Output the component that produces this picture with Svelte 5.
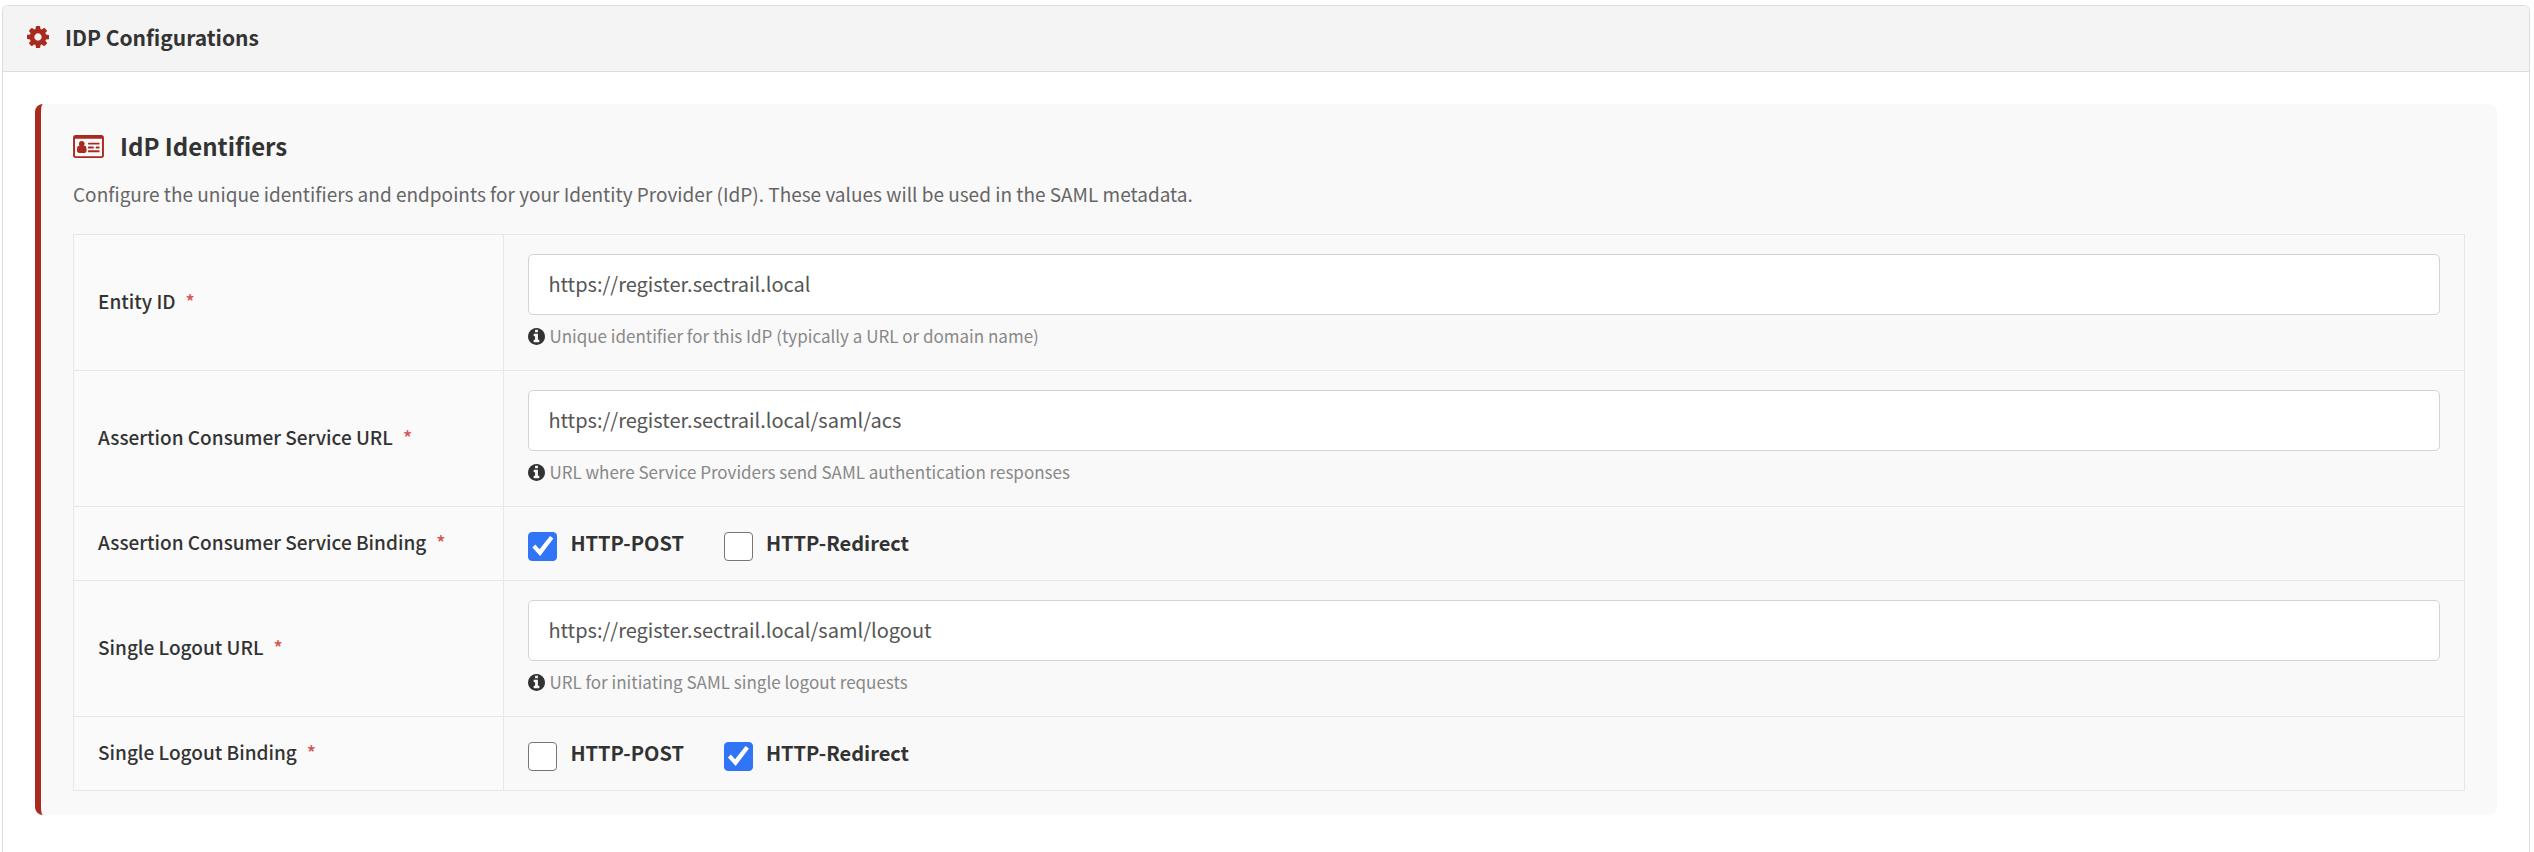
<script lang="ts">
  interface Row {
    id: string
    label: string
    value?: string
    help?: string
    post?: boolean
    redirect?: boolean
  }

  let rows: Row[] = $state([
    { id: 'entity-id', label: 'Entity ID', value: 'https://register.sectrail.local', help: 'Unique identifier for this IdP (typically a URL or domain name)' },
    { id: 'acs-url', label: 'Assertion Consumer Service URL', value: 'https://register.sectrail.local/saml/acs', help: 'URL where Service Providers send SAML authentication responses' },
    { id: 'acs-binding', label: 'Assertion Consumer Service Binding', post: true, redirect: false },
    { id: 'slo-url', label: 'Single Logout URL', value: 'https://register.sectrail.local/saml/logout', help: 'URL for initiating SAML single logout requests' },
    { id: 'slo-binding', label: 'Single Logout Binding', post: false, redirect: true },
  ])
</script>

<main class="page">
  <div class="panel">
    <header class="panel-head">
      <svg class="gear" viewBox="0 0 1536 1536" aria-hidden="true">
        <path d="M1024 768q0-106-75-181t-181-75-181 75-75 181 75 181 181 75 181-75 75-181zm512-109v222q0 12-8 23t-20 13l-185 28q-19 54-39 91 35 50 107 138 10 12 10 25t-9 23q-27 37-99 108t-94 71q-12 0-26-9l-138-108q-44 23-91 38-16 136-29 186-7 28-36 28H657q-14 0-24.500-8.500T621 1506l-28-184q-49-16-90-37l-141 107q-10 9-25 9-14 0-25-11-126-114-165-168-7-10-7-23 0-12 8-23 15-21 51-66.500t54-70.500q-27-50-41-99L29 913q-13-2-21-12.500T0 877V655q0-12 8-23t19-13l186-28q14-46 39-92-40-57-107-138-10-12-10-24 0-10 9-23 26-36 98.500-107.500T337 135q13 0 26 10l138 107q44-23 91-38 16-136 29-186 7-28 36-28h222q14 0 24.500 8.500T915 30l28 184q49 16 90 37l142-107q9-9 24-9 13 0 25 10 129 119 165 170 7 8 7 22 0 12-8 23-15 21-51 66.500t-54 70.500q26 50 41 98l183 28q13 2 21 12.500t8 23.500z" />
      </svg>
      <h1>IDP Configurations</h1>
    </header>

    <div class="panel-body">
      <section class="section">
        <div class="section-head">
          <svg class="card-icon" viewBox="0 0 2048 1792" aria-hidden="true">
            <path fill-rule="evenodd" d="M160 128h1728q66 0 113 47t47 113v1216q0 66-47 113t-113 47H160q-66 0-113-47T0 1504V288q0-66 47-113t113-47zM128 384v1120q0 13 9.500 22.500T160 1536h1728q13 0 22.500-9.500t9.500-22.500V384z" />
            <path d="M896 1157q0 77-43 127t-105 44H404q-62 0-105-44t-43-127q0-57 6-108t20-101 46-79 84-29q67 64 164 64t164-64q52 0 84 29t46 79 20 101 6 108zM768 720q0 79-56 135t-136 57-136-57-56-135 56-136 136-56 136 56 56 136z" />
            <path d="M1024 1152h704q32 0 32 32v64q0 32-32 32h-704q-32 0-32-32v-64q0-32 32-32zM1024 896h320q32 0 32 32v64q0 32-32 32h-320q-32 0-32-32v-64q0-32 32-32zM1536 896h192q32 0 32 32v64q0 32-32 32h-192q-32 0-32-32v-64q0-32 32-32zM1024 640h704q32 0 32 32v64q0 32-32 32h-704q-32 0-32-32v-64q0-32 32-32z" />
          </svg>
          <h2>IdP Identifiers</h2>
        </div>
        <p class="intro">Configure the unique identifiers and endpoints for your Identity Provider (IdP). These values will be used in the SAML metadata.</p>

        <table>
          <tbody>
            {#each rows as row (row.id)}
              <tr>
                {#if row.value !== undefined}
                  <th scope="row"><label for={row.id}>{row.label}<span class="required">*</span></label></th>
                  <td>
                    <input class="field" type="text" id={row.id} aria-describedby="{row.id}-help" bind:value={row.value} />
                    <p class="help" id="{row.id}-help">
                      <svg class="info" viewBox="0 0 1536 1536" aria-hidden="true">
                        <path d="M1024 1248v-160q0-14-9-23t-23-9h-96V544q0-14-9-23t-23-9H544q-14 0-23 9t-9 23v160q0 14 9 23t23 9h96v320h-96q-14 0-23 9t-9 23v160q0 14 9 23t23 9h448q14 0 23-9t9-23zM896 352V192q0-14-9-23t-23-9H672q-14 0-23 9t-9 23v160q0 14 9 23t23 9h192q14 0 23-9t9-23zm640 416q0 209-103 385.500T1153.500 1433 768 1536t-385.500-103T103 1153.500 0 768t103-385.500T382.500 103 768 0t385.500 103T1433 382.500 1536 768z" />
                      </svg>
                      <span>{row.help}</span>
                    </p>
                  </td>
                {:else}
                  <th scope="row" id={row.id}>{row.label}<span class="required">*</span></th>
                  <td>
                    <div class="choices" role="group" aria-labelledby={row.id}>
                      <label class="choice"><input type="checkbox" bind:checked={row.post} /><span>HTTP-POST</span></label>
                      <label class="choice"><input type="checkbox" bind:checked={row.redirect} /><span>HTTP-Redirect</span></label>
                    </div>
                  </td>
                {/if}
              </tr>
            {/each}
          </tbody>
        </table>
      </section>
    </div>
  </div>
</main>

<style>
  :global(body) { background: #fff; }
  * { box-sizing: border-box; }
  .page { min-height: 100vh; display: flex; padding: 5px 4px 0 2px; color: #333; font-family: "Source Sans Pro", "Noto Sans CJK SC", "Noto Sans", sans-serif; }
  .panel { flex: 1; border: 1px solid #ddd; border-bottom: none; border-radius: 6px 6px 0 0; }
  h1, h2, p { margin: 0; }
  svg { flex: none; fill: currentColor; }

  .panel-head { display: flex; align-items: center; gap: 16px; height: 66px; padding: 0 24px 3px; background: #f4f4f4; border-bottom: 1px solid #ddd; border-radius: 5px 5px 0 0; }
  h1 { font-size: 21px; line-height: 32px; font-weight: 700; }
  .gear { width: 22px; height: 22px; color: #a92b20; }

  .panel-body { padding: 32px; }
  .section { padding: 22px 32px 24px; background: #f9f9f9; border-left: 6px solid #a92b20; border-radius: 8px; }
  .section-head { display: flex; align-items: center; gap: 16px; height: 40px; }
  h2 { font-size: 24px; line-height: 36px; font-weight: 700; }
  .card-icon { width: 31px; height: 27px; color: #a92b20; }
  .intro { margin: 12px 0 25px; font-size: 19px; line-height: 31px; color: #666; }

  table { width: 100%; border-collapse: collapse; table-layout: fixed; }
  th, td { border: 1px solid #e7e7e7; padding: 19px 24px; vertical-align: middle; }
  th { width: 18%; padding: 17px 24px 20px; background: #fafafa; text-align: left; font-size: 19px; line-height: 28px; font-weight: 500; }
  .required { margin-left: 10px; color: #d9534f; }
  .field { display: block; width: 100%; height: 61px; padding: 0 19px 2px; border: 1px solid #d2d2d9; border-radius: 5px; background: #fff; color: #555; font-family: inherit; font-size: 20px; }
  .help { display: flex; align-items: center; gap: 4px; margin-top: 6px; font-size: 17px; line-height: 30px; color: #888; }
  .info { width: 17px; height: 17px; color: #333; }

  .choices { display: flex; gap: 40px; height: 35px; align-items: center; }
  .choice { display: flex; align-items: center; gap: 13px; font-size: 20px; line-height: 30px; font-weight: 700; }
  .choice span { padding-bottom: 2px; }
  .choice input { appearance: none; width: 29px; height: 29px; margin: 5px 0 0; display: grid; place-items: center; border: 1px solid #767676; border-radius: 4px; background: #fff; }
  .choice input:checked { border-color: #3175f6; background: #3175f6; }
  .choice input:checked::before { content: ""; width: 21px; height: 20px; background: #fff; clip-path: polygon(0 57%, 14% 43%, 34% 66%, 84% 0, 100% 12%, 37% 100%); }
</style>
